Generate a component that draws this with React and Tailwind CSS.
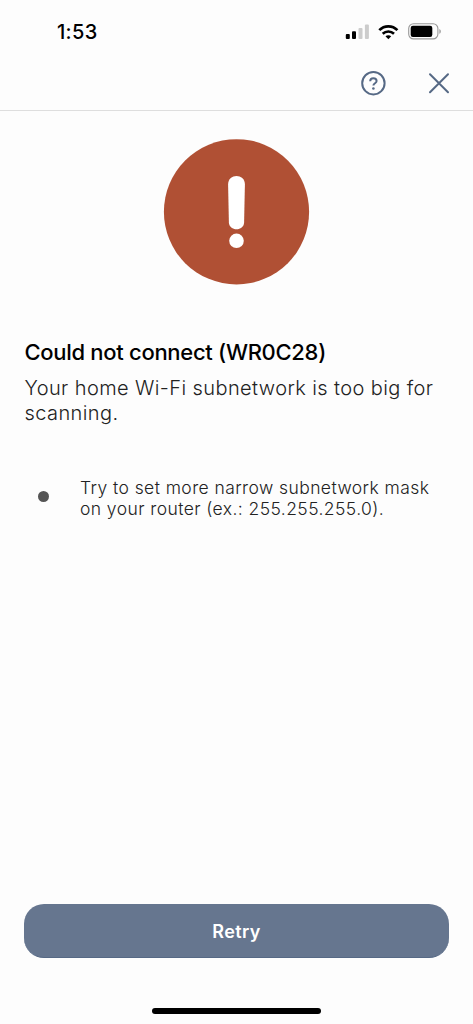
import React from 'react';

const suggestions = [
  ['Try to set more narrow subnetwork mask', 'on your router (ex.: 255.255.255.0).'],
];

function SignalIcon() {
  return (
    <svg width="24" height="16" viewBox="0 0 24 16">
      <rect x="0.8" y="10" width="4" height="5" rx="1" fill="#000" />
      <rect x="7" y="7.2" width="4" height="7.8" rx="1" fill="#000" />
      <rect x="13.5" y="4" width="4" height="11" rx="1" fill="#ccc" />
      <rect x="19.9" y="0.5" width="4" height="14.5" rx="1" fill="#ccc" />
    </svg>
  );
}

function WifiIcon() {
  return (
    <svg width="21" height="16" viewBox="0 0 21 16" fill="none" stroke="#000">
      <path d="M1.3 6.1C6.3 1 14.4 1 19.4 6.1" strokeWidth="2.7" />
      <path d="M4.7 9.8C7.9 6.7 12.8 6.7 16 9.8" strokeWidth="2.6" />
      <path d="M10.35 15.2L7.5 12.3C9.1 10.9 11.6 10.9 13.2 12.3Z" fill="#000" stroke="none" />
    </svg>
  );
}

function BatteryIcon() {
  return (
    <svg width="34" height="17" viewBox="0 0 34 17">
      <rect x="0.7" y="0.7" width="29.2" height="15.2" rx="4.8" fill="none" stroke="#999" strokeWidth="1.1" />
      <rect x="2.7" y="2.7" width="21.6" height="11.2" rx="2.2" fill="#000" />
      <path d="M31.4 6V10.8C33.3 10 33.3 6.8 31.4 6Z" fill="#999" />
    </svg>
  );
}

function HelpIcon() {
  return (
    <svg width="26" height="26" viewBox="0 0 26 26" fill="none" stroke="#566985" strokeWidth="2">
      <circle cx="13.4" cy="13.2" r="11.2" />
      <path d="M10.2 11.2C10.2 9.3 11.4 8.2 13.3 8.2C15.2 8.2 16.6 9.4 16.6 11C16.6 13.2 13.4 13.2 13.4 15.5" strokeWidth="2" />
      <circle cx="13.4" cy="18.5" r="1.3" fill="#566985" stroke="none" />
    </svg>
  );
}

function CloseIcon() {
  return (
    <svg width="22" height="22" viewBox="0 0 22 22" stroke="#566985" strokeWidth="2" strokeLinecap="round">
      <path d="M2 2.3L20 20.3M20 2.3L2 20.3" />
    </svg>
  );
}

function AlertIcon() {
  return (
    <svg width="147" height="146" viewBox="0 0 147 146">
      <circle cx="73.5" cy="72.8" r="72.6" fill="#b05034" />
      <path d="M65.1 45.5C65.1 34.2 81.9 34.2 81.9 45.5L81.1 83.5C80.9 92.5 66.1 92.5 65.9 83.5Z" fill="#fff" />
      <circle cx="73.5" cy="101.8" r="7.3" fill="#fff" />
    </svg>
  );
}

export default function App() {
  return (
    <div className="flex flex-col h-screen bg-[#fdfdfd] text-black font-['Inter',sans-serif]">
      {/* Status bar */}
      <div className="flex items-center justify-between h-[63px] pl-[57px] pr-[31px] shrink-0">
        <span className="text-[20px] font-medium leading-none tracking-[0.3px]">1:53</span>
        <div className="flex items-center gap-[9px]">
          <SignalIcon />
          <WifiIcon />
          <BatteryIcon />
        </div>
      </div>

      {/* Navigation */}
      <div className="flex items-start justify-end gap-[42px] h-12 pt-[7px] pr-[23px] border-b border-[#dedede] shrink-0">
        <button aria-label="Help"><HelpIcon /></button>
        <button aria-label="Close" className="pt-0.5"><CloseIcon /></button>
      </div>

      {/* Message */}
      <main className="flex-1 px-6">
        <div className="flex justify-center pt-7">
          <AlertIcon />
        </div>
        <h1 className="mt-[53px] pl-[0.5px] text-[22px] leading-7 font-medium tracking-[-0.3px] whitespace-nowrap">
          Could not connect (WR0C28)
        </h1>
        <p className="mt-[10px] pl-[0.5px] text-[20px] leading-[25px] font-light tracking-[0.4px] text-[#222] whitespace-nowrap">
          Your home Wi-Fi subnetwork is too big for<br />scanning.
        </p>
        <ul className="mt-[50px]">
          {suggestions.map(([first, second]) => (
            <li key={first} className="flex items-start pl-[14px]">
              <span className="w-[11px] h-[11px] mt-[15px] mr-[31px] rounded-full bg-[#555] shrink-0" />
              <span className="pt-[0.5px] text-[17.5px] leading-[21px] font-light tracking-[0.42px] text-[#222] whitespace-nowrap">
                {first}<br />{second}
              </span>
            </li>
          ))}
        </ul>
      </main>

      {/* Action */}
      <footer className="px-6 shrink-0">
        <button className="w-full h-[54px] pt-0.5 rounded-[20px] bg-[#66768f] border-b border-[#566985] text-white text-[18px] font-semibold tracking-[0.4px]">
          Retry
        </button>
        <div className="w-[169px] h-1.5 mx-auto mt-[50px] mb-[10px] rounded-full bg-black" />
      </footer>
    </div>
  );
}
